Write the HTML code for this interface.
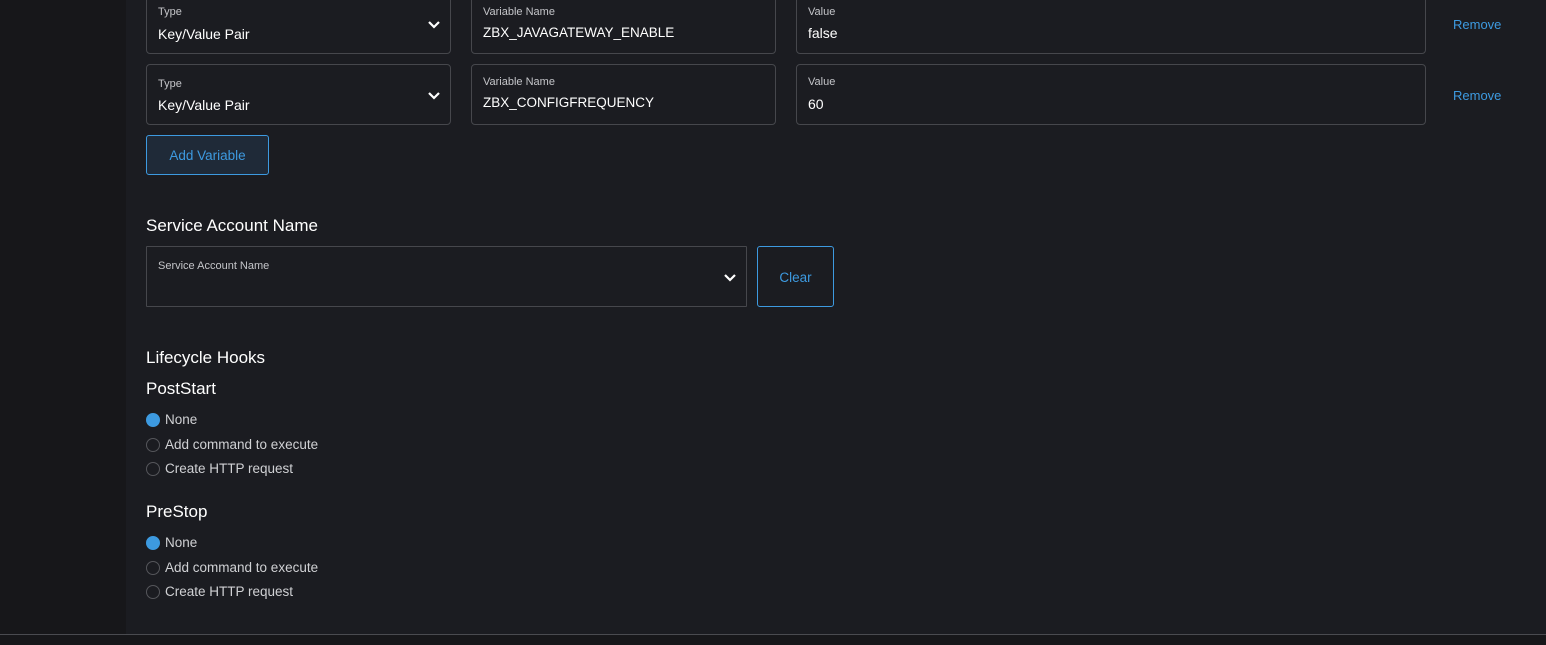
<!DOCTYPE html>
<html><head><style>
*{margin:0;padding:0;box-sizing:border-box}
body{width:1546px;height:645px;background:#1b1c21;font-family:"Liberation Sans",sans-serif;position:relative;overflow:hidden;color:#fff}
.side{position:absolute;left:0;top:0;width:126px;height:634px;background:#17171a}
.foot{position:absolute;left:0;top:634px;width:1546px;height:11px;background:#17171a;border-top:1px solid #4a4b50}
.box{position:absolute;border:1px solid #46474c;border-radius:4px;height:61px}
.lbl{position:absolute;left:11px;top:11px;font-size:11px;color:#c4c5c9}
.val{position:absolute;left:11px;top:29px;font-size:14px;color:#fff}
.chev{position:absolute;right:9px;top:20px}
.rm{position:absolute;left:1453px;font-size:13px;color:#3d9ae0}
.h{position:absolute;left:146px;font-size:17px;color:#fff}
.r{position:absolute;left:146px;font-size:13.5px;color:#d0d1d4;height:16px;line-height:16px}
.r i{position:absolute;left:0;top:1px;width:14px;height:14px;border-radius:50%;border:1px solid #55565b}
.r i.on{background:#3d9ae0;border-color:#3d9ae0}
.r span{position:absolute;left:19px;white-space:nowrap}
</style></head><body>
<div class="side"></div>
<div class="box" style="left:146px;top:-10px;width:305px;height:64px"><div class="lbl" style="top:15px">Type</div><div class="val" style="top:35px">Key/Value Pair</div><svg class="chev" width="14" height="10" viewBox="0 0 14 10" style="top:29px"><path d="M2 2l5 5 5-5" stroke="#fff" stroke-width="2.2" fill="none"/></svg></div>
<div class="box" style="left:471px;top:-10px;width:305px;height:64px"><div class="lbl" style="top:15px">Variable Name</div><div class="val" style="top:34px;font-size:13.5px">ZBX_JAVAGATEWAY_ENABLE</div></div>
<div class="box" style="left:796px;top:-10px;width:630px;height:64px"><div class="lbl" style="top:15px">Value</div><div class="val" style="top:34px">false</div></div>
<div class="rm" style="top:17px">Remove</div>
<div class="box" style="left:146px;top:64px;width:305px"><div class="lbl" style="top:13px">Type</div><div class="val" style="top:32px">Key/Value Pair</div><svg class="chev" width="14" height="10" viewBox="0 0 14 10" style="top:26px"><path d="M2 2l5 5 5-5" stroke="#fff" stroke-width="2.2" fill="none"/></svg></div>
<div class="box" style="left:471px;top:64px;width:305px"><div class="lbl">Variable Name</div><div class="val" style="top:30px;font-size:13.5px">ZBX_CONFIGFREQUENCY</div></div>
<div class="box" style="left:796px;top:64px;width:630px"><div class="lbl">Value</div><div class="val" style="top:31px">60</div></div>
<div class="rm" style="top:88px">Remove</div>
<div style="position:absolute;left:146px;top:135px;width:123px;height:40px;border:1px solid #3d9ae0;border-radius:3px;background:#1f2a38;color:#3d9ae0;font-size:13.5px;text-align:center;line-height:40px">Add Variable</div>
<div class="h" style="top:216px">Service Account Name</div>
<div class="box" style="left:146px;top:246px;width:601px;border-radius:1px"><div class="lbl" style="top:13px">Service Account Name</div><svg class="chev" width="14" height="10" viewBox="0 0 14 10" style="top:26px"><path d="M2 2l5 5 5-5" stroke="#fff" stroke-width="2.2" fill="none"/></svg></div>
<div style="position:absolute;left:757px;top:246px;width:77px;height:61px;border:1px solid #3d9ae0;border-radius:3px;color:#3d9ae0;font-size:13.5px;text-align:center;line-height:61px">Clear</div>
<div class="h" style="top:348px">Lifecycle Hooks</div>
<div class="h" style="top:379px">PostStart</div>
<div class="r" style="top:412px"><i class="on"></i><span>None</span></div>
<div class="r" style="top:437px"><i></i><span>Add command to execute</span></div>
<div class="r" style="top:461px"><i></i><span>Create HTTP request</span></div>
<div class="h" style="top:502px">PreStop</div>
<div class="r" style="top:535px"><i class="on"></i><span>None</span></div>
<div class="r" style="top:560px"><i></i><span>Add command to execute</span></div>
<div class="r" style="top:584px"><i></i><span>Create HTTP request</span></div>
<div class="foot"></div>
</body></html>
